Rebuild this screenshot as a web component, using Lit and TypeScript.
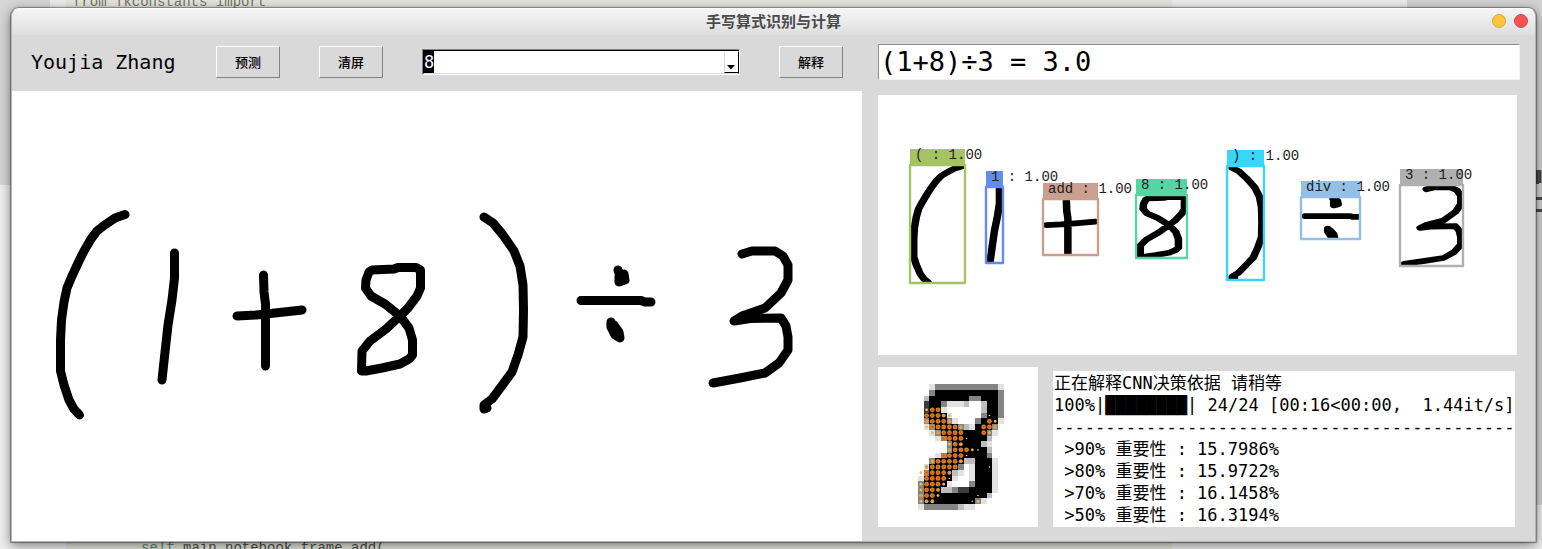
import { LitElement, html, svg, css } from "lit";
import { customElement, state } from "lit/decorators.js";

/* Handwritten strokes, in the pad's 850 x 450 space shifted by (12, 91). */
const STROKES: string[] = [
  "M125 214.5 115 218 104 225.5 97 231 91 239 84 251 79 261 72 276 67 288 64 302 61.5 320 60.5 340 60.5 371 64 385 69 400 74 409 79.5 415",
  "M174.5 253V278L172 300 168 325 165 352 162 380",
  "M263.5 275 264 292 265.5 304V366M237 316 256 315 275 313 302 310",
  "M372 270 394 269 398 267.5 416 267.5 420.5 270V288L417 296 408 308 400 316 386 329 370 341 362 351 361.5 371 366 371 382 368 400 364 409 359 412.5 355V340L409 328 400 316 385 304 371 296 365.5 288 366 280 369 272Z",
  "M484 217 493 223 503 235 514 251 520 266 523 285 523.5 310 523 337 518 355 512 372 501 387 492 399 484 405 484 409 487 408",
  "M581 300.5H641L645 302H651M618 270 620 276 624 274 625 280 619 282 619 276 623 278M611 322 611 327 615 335 620 338 619 332 614 325",
  "M742 254 752 251H775L783 256 788 265V280L781 293 765 308 742 316 734 321 750 318.5 781 318 786 326 788 337V350L779 363 765 373 740 378 713 383",
];

interface Box {
  label: string;
  x: number;
  y: number;
  w: number;
  h: number;
  color: string;
}

/* Detected symbols on the 639 x 260 result view. */
const BOXES: Box[] = [
  { label: "( : 1.00", x: 32, y: 70, w: 55, h: 118, color: "#a6c364" },
  { label: "1 : 1.00", x: 108, y: 92, w: 17, h: 76, color: "#648cf0" },
  { label: "add : 1.00", x: 165, y: 104, w: 55, h: 56, color: "#cb9f8f" },
  { label: "8 : 1.00", x: 258, y: 100, w: 51, h: 63, color: "#54d5a3" },
  { label: ") : 1.00", x: 349, y: 71, w: 37, h: 114, color: "#38d6fb" },
  { label: "div : 1.00", x: 423, y: 102, w: 59, h: 42, color: "#94c0e5" },
  { label: "3 : 1.00", x: 522, y: 90, w: 63, h: 81, color: "#b0b0b0" },
];

/* Grey levels of the sampled digit: rows 3-24, columns 7-21 of a 28 x 28 image. */
const PIXELS: string[] = [
  "..accccccccccca",
  "..c###########c",
  ".b#######cc###c",
  ".d##caaab..b##c",
  ".d##a......b##c",
  ".####a.....c##c",
  ".c###ca...c###a",
  ".ac####cba###c.",
  "..ac########ca.",
  "...ac#######b..",
  ".....c#####ba..",
  ".....c######b..",
  "...ac#######c..",
  "..c#####bb###a.",
  ".a#####c.a###a.",
  ".c####ba.a###a.",
  "a#####a..a###a.",
  "c####a...c###a.",
  "c###bbcdd####a.",
  "c###########b..",
  "c#########ca...",
  "accccccbaa.....",
];
const GREY: Record<string, string> = {
  a: "#e2e2e2",
  b: "#bdbdbd",
  c: "#848484",
  d: "#3c3c3c",
  "#": "#000",
};

/* Importance dots on the same grid, 1 = faint, 4 = strong. */
const DOTS: string[] = [
  "...............",
  "...............",
  "...............",
  "...............",
  ".244...........",
  ".44432......1..",
  ".34443......42.",
  ".2444443...443.",
  "..234444...42..",
  "....44441......",
  ".....243.......",
  ".....344421....",
  "....44441......",
  "..344443.......",
  ".344444.....1..",
  "244443.........",
  ".44441.........",
  "24442..........",
  "2443...........",
  "3442......1....",
  "233......12....",
  "...............",
];
const RADIUS = [0, 0.14, 0.24, 0.34, 0.42];
const DOT_COLOR = ["", "#f0dc78", "#ecc050", "#e0a040", "#dc8020"];

const LOG = [
  "正在解释CNN决策依据 请稍等",
  "100%|████████| 24/24 [00:16<00:00,  1.44it/s]",
  "-".repeat(45),
  " >90% 重要性 : 15.7986%",
  " >80% 重要性 : 15.9722%",
  " >70% 重要性 : 16.1458%",
  " >50% 重要性 : 16.3194%",
].join("\n");

@customElement("stroke-pad")
class StrokePad extends LitElement {
  static styles = css`
    :host {
      display: block;
      background: #fff;
    }
    .ink {
      display: block;
      width: 100%;
      fill: none;
      stroke: #000;
      stroke-width: 9;
      stroke-linecap: round;
      stroke-linejoin: round;
    }
  `;
  render() {
    return html`<svg class="ink" viewBox="12 91 850 450" role="img" aria-label="(1+8)÷3">
      ${STROKES.map((d) => svg`<path d=${d}></path>`)}
    </svg>`;
  }
}

@customElement("detection-view")
class DetectionView extends LitElement {
  static styles = css`
    :host {
      display: block;
      background: #fff;
    }
    .view {
      display: block;
      width: 100%;
    }
    .ink {
      fill: none;
      stroke: #000;
      stroke-width: 10;
      stroke-linejoin: round;
      stroke-linecap: round;
    }
    .frame {
      fill: none;
      stroke-width: 2.4;
      stroke-linejoin: round;
    }
    .label {
      font: 14px "Liberation Mono", monospace;
      fill: #222;
      white-space: pre;
    }
  `;
  render() {
    return html`<svg class="view" viewBox="0 0 639 260">
      <clipPath id="found">
        ${BOXES.map((b) => svg`<rect x=${b.x + 1} y=${b.y} width=${b.w - 2} height=${b.h}></rect>`)}
      </clipPath>
      <g clip-path="url(#found)">
        <g class="ink" transform="scale(.752 .578) translate(-13 -91)">
          ${STROKES.map((d) => svg`<path d=${d}></path>`)}
        </g>
      </g>
      ${BOXES.map(
        (b) => svg`
          <rect x=${b.x} y=${b.y - 16} width=${b.w} height="16" fill=${b.color}></rect>
          <rect class="frame" x=${b.x} y=${b.y} width=${b.w} height=${b.h} stroke=${b.color}></rect>`
      )}
      ${BOXES.map((b) => svg`<text class="label" x=${b.x + 5} y=${b.y - 6}>${b.label}</text>`)}
    </svg>`;
  }
}

@customElement("digit-heatmap")
class DigitHeatmap extends LitElement {
  static styles = css`
    :host {
      display: block;
      background: #fff;
    }
    .grid {
      display: block;
      width: 100%;
    }
    .cells {
      shape-rendering: crispEdges;
    }
  `;
  render() {
    const cells = PIXELS.flatMap((row, r) =>
      [...row].map((ch, c) =>
        ch === "."
          ? null
          : svg`<rect x=${c + 7} y=${r + 3} width="1" height="1" fill=${GREY[ch]}></rect>`
      )
    );
    const dots = DOTS.flatMap((row, r) =>
      [...row].map((ch, c) => {
        if (ch === ".") return null;
        const n = Number(ch);
        return svg`<circle cx=${c + 7.5} cy=${r + 3.5} r=${RADIUS[n]} fill=${DOT_COLOR[n]}></circle>
          ${n === 4 ? svg`<circle cx=${c + 7.5} cy=${r + 3.5} r=".2" fill="#d05c14"></circle>` : null}`;
      })
    );
    return html`<svg class="grid" viewBox="0 0 28 28" role="img" aria-label="8">
      <g class="cells">${cells}</g>
      ${dots}
    </svg>`;
  }
}

@customElement("app-root")
class AppRoot extends LitElement {
  @state() private symbol = "8";

  static styles = css`
    :host {
      display: block;
      --face: #d9d9d9;
      --mono: "DejaVu Sans Mono", "Noto Sans CJK SC", monospace;
    }
    * {
      box-sizing: border-box;
    }
    .desktop {
      position: relative;
      display: grid;
      min-height: 100vh;
      padding: 8px 6px 7px 11px;
      overflow: hidden;
      background: #ededed;
    }
    .shade {
      position: absolute;
      inset: 0 0 auto 0;
      height: 185px;
      background: linear-gradient(90deg, #d6d6d6 50px, #ececec 50px);
    }
    .side {
      position: absolute;
      inset: 0 0 auto auto;
      width: 135px;
      height: 505px;
      background: #d2d2d2;
    }
    .editor {
      position: absolute;
      inset: 0 24% 0 66px;
      background: #e3e4da;
      color: #73766c;
      font: 14px/16px "Liberation Mono", monospace;
      white-space: pre;
    }
    .code-top {
      position: absolute;
      top: -6px;
      left: 7px;
    }
    .code-bottom {
      position: absolute;
      bottom: -7px;
      left: 75px;
      color: #4c4e48;
    }
    .self {
      color: #5f8878;
    }
    .mark {
      position: absolute;
      top: 169px;
      right: 0;
      width: 7px;
      height: 44px;
    }
    .window {
      position: relative;
      display: flex;
      flex-direction: column;
      border: 1px solid #b4b4b4;
      border-top-color: #fafafa;
      border-radius: 8px 8px 0 0;
      background: var(--face);
      box-shadow: 0 0 1px 1px rgba(0, 0, 0, 0.35), 0 3px 12px rgba(0, 0, 0, 0.5);
    }
    .titlebar {
      display: grid;
      grid-template-columns: 1fr auto 1fr;
      align-items: center;
      height: 26px;
      padding: 0 7px 2px;
      border-radius: 7px 7px 0 0;
      background: linear-gradient(#f5f5f5, #dedede);
    }
    .title {
      grid-column: 2;
      margin: 0;
      color: #4b4b4b;
      font: bold 15px/24px "Noto Sans CJK SC", sans-serif;
    }
    .lights {
      display: flex;
      justify-content: flex-end;
      gap: 8px;
    }
    .light {
      width: 14px;
      height: 14px;
      padding: 0;
      border: 1px solid #d9a92f;
      border-radius: 50%;
      background: #fbc43a;
    }
    .close {
      border-color: #d9484d;
      background: #f35257;
    }
    .body {
      flex: 1;
      display: grid;
      grid-template-columns: minmax(0, 850fr) minmax(0, 642fr);
      gap: 16px;
      padding-right: 15px;
    }
    .left {
      display: flex;
      flex-direction: column;
    }
    .toolbar {
      display: flex;
      align-items: center;
      gap: 39px;
      height: 56px;
      padding: 0 19px 2px;
    }
    .author {
      min-width: 146px;
      font: 20px/24px var(--mono);
      white-space: nowrap;
    }
    .push {
      flex: none;
      width: 64px;
      height: 32px;
      padding: 0;
      border: 1px solid;
      border-color: #fff #828282 #828282 #fff;
      background: var(--face);
      color: #000;
      font: 500 13px/20px "Noto Sans CJK SC", sans-serif;
    }
    .combo {
      position: relative;
      flex: 1;
      display: flex;
      height: 26px;
      border: 1px solid;
      border-color: #828282 #fff #fff #828282;
    }
    .select {
      appearance: none;
      width: 100%;
      padding: 0;
      border: 1px solid;
      border-color: #000 #000 var(--face) #000;
      border-radius: 0;
      outline: 0;
      background: linear-gradient(#000, #000) 0 0 / 10px 100% no-repeat #fff;
      color: #fff;
      font: 17px/21px var(--mono);
    }
    .option {
      color: #000;
    }
    .arrow {
      position: absolute;
      inset: 1px 0 1px auto;
      width: 15px;
      border: 1px solid;
      border-color: #fff #000 #000 #d9d9d9;
      background: #fff;
      pointer-events: none;
    }
    .tip {
      display: block;
      width: 13px;
      height: 20px;
    }
    .pad {
      flex: 1;
    }
    .right {
      display: flex;
      flex-direction: column;
      padding-top: 9px;
    }
    .result {
      width: 100%;
      height: 36px;
      padding: 0 1px 2px;
      border: 1px solid;
      border-color: #909090 #f4f4f4 #f4f4f4 #909090;
      outline: 0;
      background: #fff;
      color: #000;
      font: 27px/32px var(--mono);
    }
    .detect {
      margin: 15px 3px 12px 0;
    }
    .explain {
      display: grid;
      grid-template-columns: 160px minmax(0, 1fr);
      gap: 15px;
      padding-right: 5px;
    }
    .log {
      width: 100%;
      height: 156px;
      margin: 4px 0 0;
      padding: 1px 0 1px 1px;
      border: 0;
      outline: 0;
      resize: none;
      overflow: hidden;
      background: #fff;
      color: #000;
      font: 17px/22px var(--mono);
      white-space: pre;
    }
  `;

  render() {
    return html`
      <div class="desktop">
        <div class="shade"></div>
        <div class="side"></div>
        <div class="editor">
          <span class="code-top">from Tkconstants import</span>
          <span class="code-bottom"><span class="self">self</span>.main_notebook_frame.add(</span>
        </div>
        <svg class="mark" viewBox="0 0 7 44" fill="none" stroke="#4a4a4a" stroke-width="3">
          <path d="M0 2.500H5V14M2.500 2V15M0 29.500H7M0 41.500H7"></path>
        </svg>
        <main class="window">
          <header class="titlebar">
            <h1 class="title">手写算式识别与计算</h1>
            <div class="lights">
              <button class="light" aria-label="最小化"></button>
              <button class="light close" aria-label="关闭"></button>
            </div>
          </header>
          <div class="body">
            <section class="left">
              <div class="toolbar">
                <span class="author">Youjia Zhang</span>
                <button class="push">预测</button>
                <button class="push">清屏</button>
                <div class="combo">
                  <select
                    class="select"
                    aria-label="符号"
                    .value=${this.symbol}
                    @change=${(e: Event) => (this.symbol = (e.target as HTMLSelectElement).value)}
                  >
                    ${["8", "(", "1", "+", ")", "÷", "3"].map(
                      (s) => html`<option class="option" value=${s}>${s}</option>`
                    )}
                  </select>
                  <span class="arrow">
                    <svg class="tip" viewBox="0 0 13 20"><path d="M2 13H10L6 17.500Z"></path></svg>
                  </span>
                </div>
                <button class="push">解释</button>
              </div>
              <stroke-pad class="pad"></stroke-pad>
            </section>
            <section class="right">
              <input class="result" aria-label="计算结果" value="(1+8)÷3 = 3.0" />
              <detection-view class="detect"></detection-view>
              <div class="explain">
                <digit-heatmap></digit-heatmap>
                <textarea class="log" aria-label="解释输出" readonly .value=${LOG}></textarea>
              </div>
            </section>
          </div>
        </main>
      </div>
    `;
  }
}
